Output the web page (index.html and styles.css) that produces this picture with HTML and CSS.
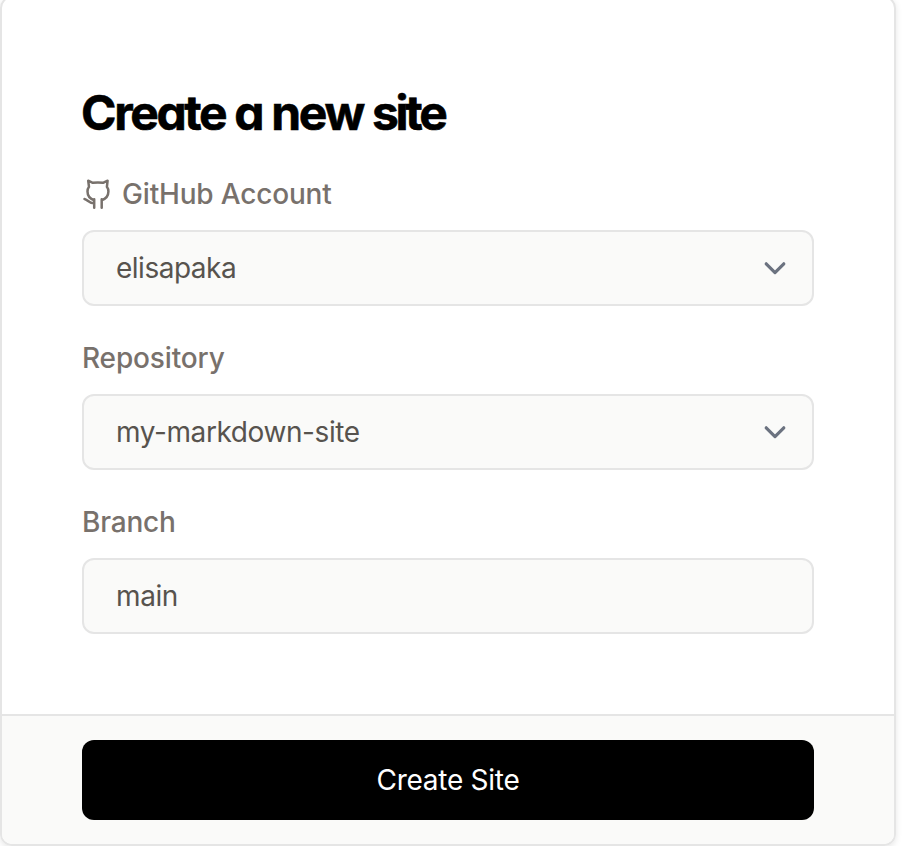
FILE: index.html
```
<!DOCTYPE html>
<html lang="en">
<head>
<meta charset="utf-8">
<title>Create a new site</title>
<link rel="stylesheet" href="styles.css">
</head>
<body>
<form class="card">
  <div class="card-body">
    <h1 class="title">Create a new <span class="title-end">site</span></h1>
    <div class="field">
      <label class="label"><svg class="github" viewBox="0 0 32 34"><path d="M12.200 30.700V23.200C8 21.800 5.500 18.500 5.500 14.500c0-2.200.6-3.500 1.500-4.700L6.200 3.700l4.600 2.100c3.200-.5 7-.5 10.200 0l4.600-2.100-.7 6.100c.9 1.200 1.500 2.500 1.500 4.700 0 4-2.500 7.300-6.700 8.700V30.700M2.500 22c3 .5 4.500 4.500 9.700 4.300M12.200 22.300v2M19.700 22.300v2"/></svg><span class="t-account">GitHub Account</span></label>
      <div class="control"><span class="v-account">elisapaka</span><svg class="chevron" viewBox="0 0 20 20"><path d="M6.100 7.900l4.400 4.400 4.400-4.400"/></svg></div>
    </div>
    <div class="field">
      <label class="label"><span class="t-repo">Repository</span></label>
      <div class="control"><span class="v-repo">my-markdown-site</span><svg class="chevron" viewBox="0 0 20 20"><path d="M6.100 7.900l4.400 4.400 4.400-4.400"/></svg></div>
    </div>
    <div class="field">
      <label class="label"><span class="t-branch">Branch</span></label>
      <div class="control"><span class="v-branch">main</span></div>
    </div>
  </div>
  <div class="card-footer"><button class="submit" type="button">Create Site</button></div>
</form>
</body>
</html>
```
FILE: styles.css
```
* { box-sizing: border-box; }
html, body { margin: 0; height: 100%; overflow: hidden; }
body { background: #fff; font-family: Inter, sans-serif; }
.card {
  width: 896px;
  height: 850px;
  margin-top: -4px;
  border: 2px solid #e5e5e5;
  border-radius: 12px;
  box-shadow: 0 2px 6px rgba(0, 0, 0, .1);
  overflow: hidden;
}
.card-body { height: 716px; padding: 83px 80px 0; }
.title {
  margin: 0 0 0 -1px;
  height: 64px;
  line-height: 64px;
  font-size: 48px;
  font-weight: 700;
  font-feature-settings: "cv11";
  letter-spacing: -2.35px;
  -webkit-text-stroke: .6px #000;
  color: #000;
  white-space: nowrap;
}
.title-end { letter-spacing: -3.2px; }
.field { margin-top: 28px; }
.title + .field { margin-top: 25px; }
.label {
  display: flex;
  align-items: center;
  gap: 8px;
  height: 48px;
  font-size: 28px;
  font-weight: 500;
  color: #78716c;
}
.control {
  display: flex;
  align-items: center;
  justify-content: space-between;
  height: 76px;
  margin-top: 12px;
  padding: 0 18px 0 32px;
  border: 2px solid #e5e5e5;
  border-radius: 12px;
  background: #fafaf9;
  font-size: 28px;
  color: #57534e;
}
.t-account { letter-spacing: -.18px; }
.t-repo { letter-spacing: -.15px; }
.t-branch { letter-spacing: -.2px; }
.v-account { letter-spacing: -.5px; }
.v-repo { letter-spacing: -.4px; }
.v-branch { letter-spacing: -.4px; }
.github { width: 32px; height: 34px; fill: none; stroke: currentColor; stroke-width: 2.5; stroke-linecap: round; stroke-linejoin: round; }
.chevron { width: 40px; height: 40px; fill: none; stroke: #6b7280; stroke-width: 1.6; stroke-linecap: round; stroke-linejoin: round; }
.card-footer { height: 130px; padding: 24px 80px; border-top: 2px solid #e5e5e5; background: #fafaf9; }
.submit {
  display: block;
  width: 100%;
  height: 80px;
  border: 0;
  border-radius: 12px;
  background: #000;
  color: #fff;
  font: 400 28px Inter, sans-serif;
  letter-spacing: -.25px;
}
```
